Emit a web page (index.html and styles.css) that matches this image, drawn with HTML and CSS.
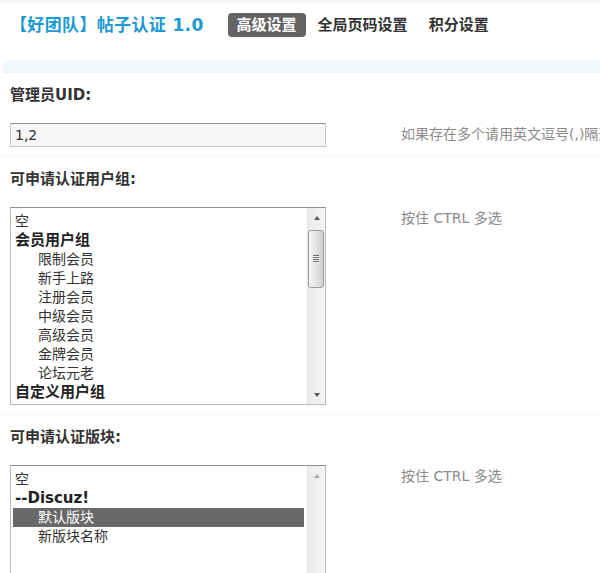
FILE: index.html
```html
<!DOCTYPE html>
<html lang="zh-CN">
<head>
<meta charset="utf-8">
<title>帖子认证</title>
<link rel="stylesheet" href="styles.css">
</head>
<body>
<header class="header">
  <h1 class="title">【好团队】帖子认证 1.0</h1>
  <nav class="tabs">
    <span class="tab active">高级设置</span>
    <span class="tab">全局页码设置</span>
    <span class="tab">积分设置</span>
  </nav>
</header>
<div class="band"></div>

<section class="field">
  <div class="label">管理员UID:</div>
  <div class="row">
    <div class="input">1,2</div>
    <div class="hint">如果存在多个请用英文逗号(,)隔开</div>
  </div>
</section>

<section class="field">
  <div class="label">可申请认证用户组:</div>
  <div class="row">
    <div class="listbox">
      <div class="list">
        <div class="opt">空</div>
        <div class="opt group">会员用户组</div>
        <div class="opt sub">限制会员</div>
        <div class="opt sub">新手上路</div>
        <div class="opt sub">注册会员</div>
        <div class="opt sub">中级会员</div>
        <div class="opt sub">高级会员</div>
        <div class="opt sub">金牌会员</div>
        <div class="opt sub">论坛元老</div>
        <div class="opt group">自定义用户组</div>
      </div>
      <div class="scroll">
        <div class="sb-btn up"><span class="arrow-up"></span></div>
        <div class="sb-track"><div class="thumb"><span class="grip"></span></div></div>
        <div class="sb-btn down"><span class="arrow-down"></span></div>
      </div>
    </div>
    <div class="hint">按住 CTRL 多选</div>
  </div>
</section>

<section class="field last">
  <div class="label">可申请认证版块:</div>
  <div class="row">
    <div class="listbox">
      <div class="list">
        <div class="opt">空</div>
        <div class="opt group">--Discuz!</div>
        <div class="opt sub sel">默认版块</div>
        <div class="opt sub">新版块名称</div>
      </div>
      <div class="scroll">
        <div class="sb-btn up"><span class="arrow-up dim"></span></div>
        <div class="sb-track"></div>
      </div>
    </div>
    <div class="hint">按住 CTRL 多选</div>
  </div>
</section>
</body>
</html>
```

FILE: styles.css
```css
* { box-sizing: border-box; }
html, body { margin: 0; padding: 0; overflow: hidden; }
body {
  width: 600px;
  height: 573px;
  font-family: "DejaVu Sans", "Noto Sans CJK SC", sans-serif;
  font-size: 14px;
  color: #333;
  background: #fff;
}

.header {
  height: 50px;
  display: flex;
  align-items: center;
  padding-left: 10px;
  background: linear-gradient(#f4f8fb 0 3px, #fff 3px);
}
.title {
  margin: 0;
  font-size: 17px;
  font-weight: bold;
  line-height: 24px;
  letter-spacing: 0.35px;
  color: #1b99d3;
  white-space: nowrap;
}
.tabs {
  display: flex;
  gap: 3px;
  margin-left: 24px;
}
.tab {
  font-size: 15px;
  font-weight: bold;
  line-height: 24px;
  padding: 0 9px;
  color: #333;
  border-radius: 4px;
  white-space: nowrap;
}
.tab.active { background: #636363; color: #fff; }

.band {
  height: 13px;
  margin: 10px 0 0 3px;
  background: #f2f9fd;
  border-bottom: 1px dotted #deeffb;
}

.field {
  margin-left: 3px;
  padding: 11px 0 9px 7px;
  border-bottom: 1px dotted #deeffb;
}
.field.last { border-bottom: 0; }
.label {
  font-size: 15px;
  font-weight: bold;
  line-height: 22px;
  color: #333;
}
.row {
  display: flex;
  align-items: flex-start;
  margin-top: 17px;
}
.input {
  flex: none;
  width: 316px;
  height: 24px;
  line-height: 22px;
  padding-left: 4px;
  border: 1px solid #c6c6c6;
  border-top-color: #8c8c8c;
  background: #f7f7f7;
  color: #333;
}
.hint {
  margin-left: 75px;
  line-height: 22px;
  color: #8a8a8a;
  white-space: nowrap;
}

.listbox {
  flex: none;
  width: 316px;
  height: 198px;
  display: flex;
  border: 1px solid #bababa;
  border-top-color: #8e8e8e;
  background: #fff;
}
.list {
  flex: 1;
  padding: 4px 3px 0 2px;
  overflow: hidden;
}
.opt {
  height: 19px;
  line-height: 19px;
  padding-left: 2px;
  white-space: nowrap;
  color: #333;
}
.opt.group { font-weight: bold; font-size: 15px; color: #222; }
.opt.sub { padding-left: 25px; }
.opt.sel { background: #696969; color: #fff; }

.scroll {
  flex: none;
  width: 18px;
  display: flex;
  flex-direction: column;
  border-left: 1px solid #e4e4e4;
  background: linear-gradient(to right, #ececec, #f4f4f4);
}
.sb-btn {
  display: flex;
  align-items: center;
  justify-content: center;
  flex: none;
}
.sb-btn.up { height: 20px; }
.sb-btn.down { height: 18px; }
.arrow-up, .arrow-down {
  width: 0;
  height: 0;
  border-left: 3px solid transparent;
  border-right: 3px solid transparent;
}
.arrow-up { border-bottom: 4px solid #5a5a5a; }
.arrow-up.dim { border-bottom-color: #a8a8a8; }
.arrow-down { border-top: 4px solid #5a5a5a; }
.sb-track { flex: 1; }
.thumb {
  margin: 2px 0 0 0;
  width: 16px;
  height: 58px;
  border: 1px solid #9c9c9c;
  border-radius: 3px;
  background: linear-gradient(to right, #f4f4f4, #e4e4e4 50%, #cfcfcf);
  display: flex;
  align-items: center;
  justify-content: center;
}
.grip {
  width: 6px;
  height: 8px;
  background: repeating-linear-gradient(#707070 0 1px, #f2f2f2 1px 2px);
}
```
